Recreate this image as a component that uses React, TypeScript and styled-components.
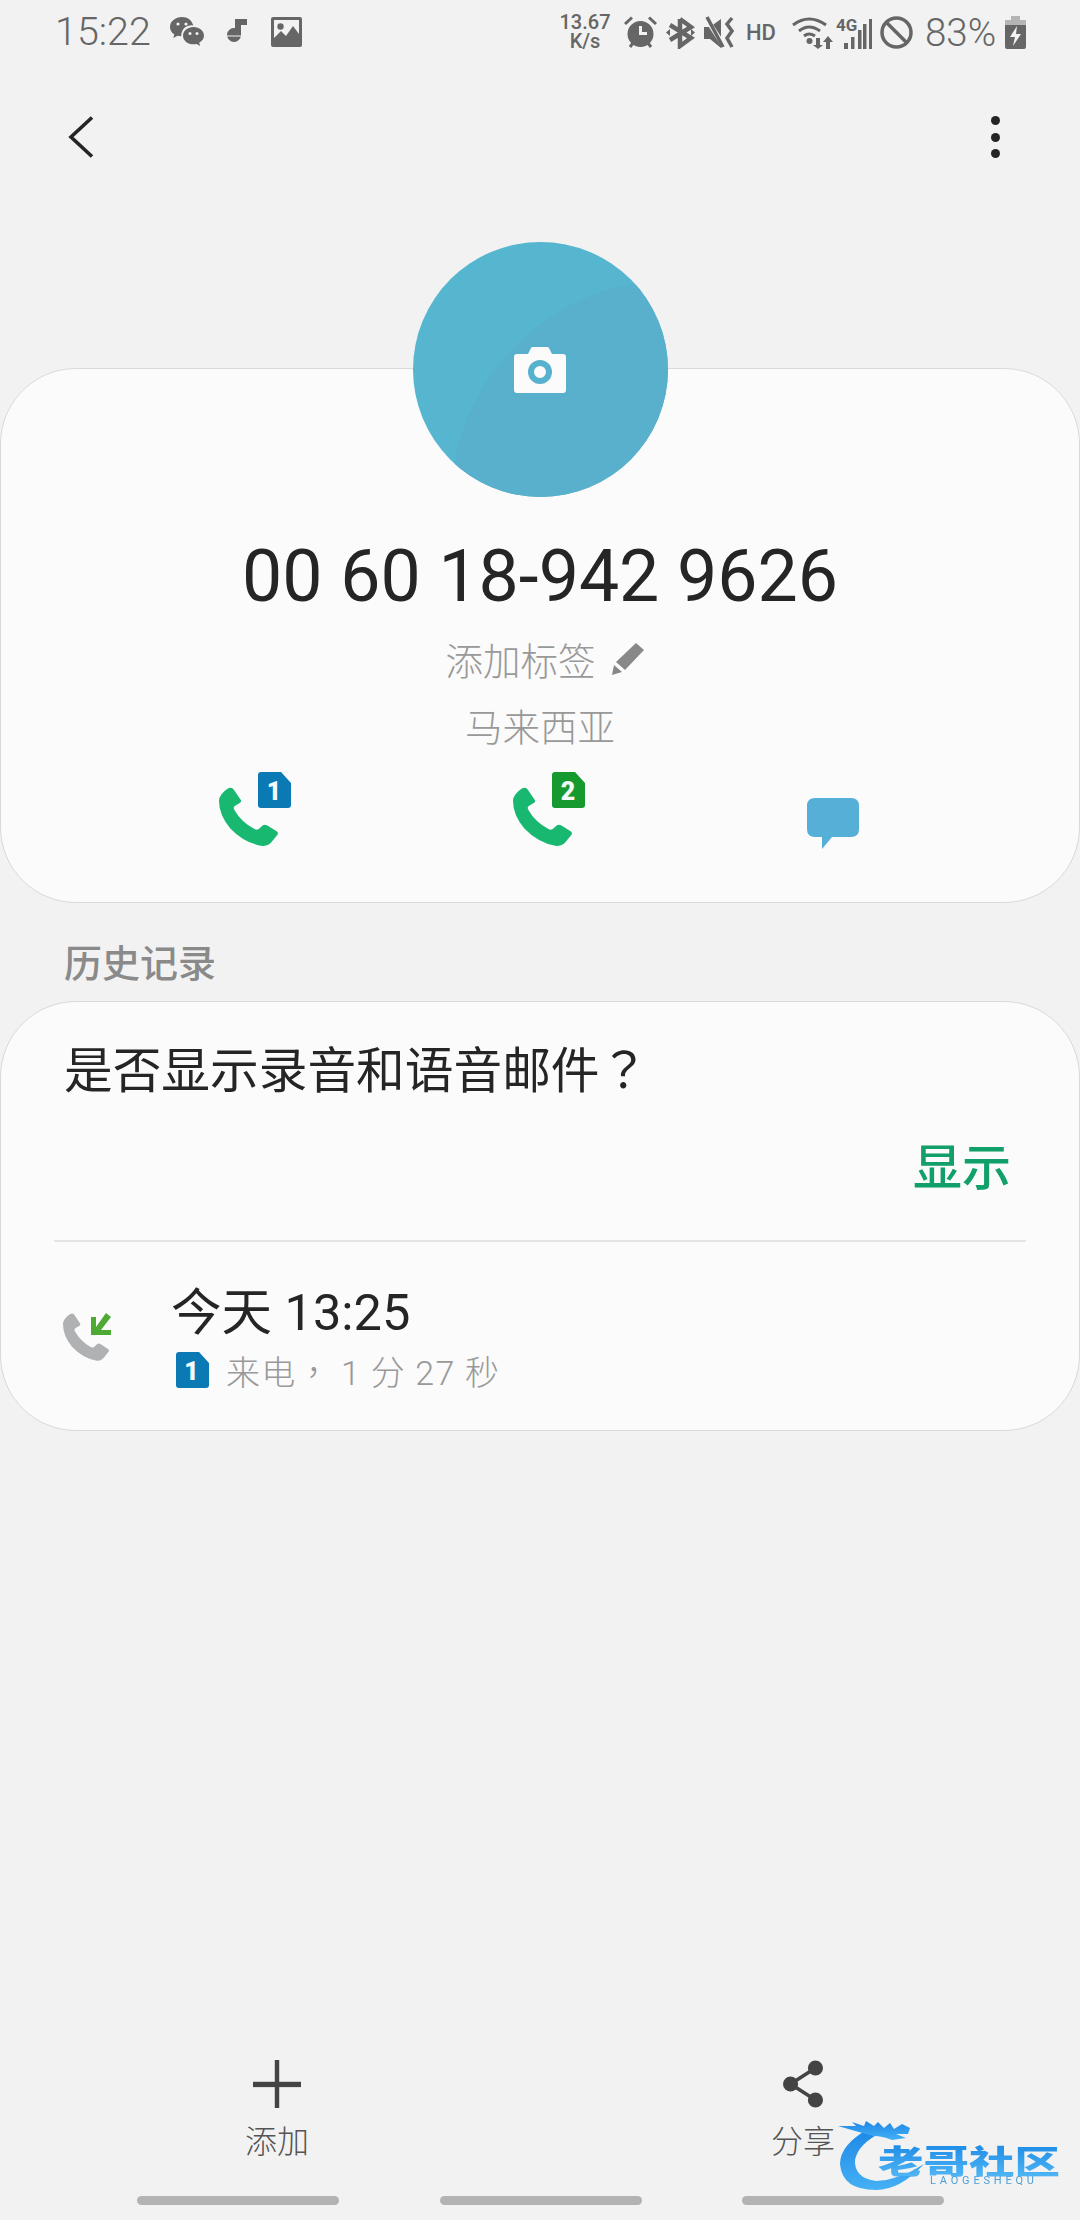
import React from 'react';
import styled, { createGlobalStyle } from 'styled-components';

const GlobalStyle = createGlobalStyle`
  html, body {
    margin: 0;
    padding: 0;
    background: #f2f2f2;
  }
  * { box-sizing: border-box; }
`;

const Page = styled.div`
  position: relative;
  width: 1080px;
  height: 2220px;
  display: flex;
  flex-direction: column;
  overflow: hidden;
  background: #f2f2f2;
  color: #252525;
  font-family: Roboto, "Noto Sans CJK SC", sans-serif;
`;

const StatusBar = styled.div`
  height: 64px;
  padding: 0 54px 0 55px;
  display: flex;
  align-items: center;
  justify-content: space-between;
  color: #666;
`;

const StatusGroup = styled.div`
  display: flex;
  align-items: center;
`;

const Clock = styled.span`
  font-size: 39.5px;
  font-weight: 300;
  line-height: 64px;
  width: 115px;
`;

const StatusIcon = styled.svg<{ $gap?: number }>`
  display: block;
  flex: none;
  margin-left: ${({ $gap }) => $gap ?? 0}px;
  fill: currentColor;
`;

const NetSpeed = styled.div`
  width: 54px;
  font-size: 20px;
  font-weight: 500;
  line-height: 19px;
  text-align: center;
`;

const HdMark = styled.span`
  margin-left: 11px;
  font-size: 22px;
  font-weight: 500;
  width: 28px;
`;

const Percent = styled.span`
  margin-left: 12px;
  width: 72px;
  font-size: 38.5px;
  font-weight: 300;
`;

const Header = styled.div`
  height: 178px;
  padding: 52px 80px 0 68px;
  display: flex;
  justify-content: space-between;
  align-items: flex-start;
`;

const Dots = styled.div`
  display: flex;
  flex-direction: column;
  gap: 7.5px;
`;

const Dot = styled.span`
  width: 9px;
  height: 9px;
  border-radius: 50%;
  background: #252525;
`;

const Card = styled.section`
  background: #fbfbfb;
  border: 1px solid #d9d9d9;
  border-radius: 76px;
`;

const ContactCard = styled(Card)`
  margin-top: 126px;
  height: 535px;
  display: flex;
  flex-direction: column;
  align-items: center;
`;

const Avatar = styled.div`
  position: relative;
  flex: none;
  width: 255px;
  height: 255px;
  margin-top: -127px;
  border-radius: 50%;
  overflow: hidden;
  background: #56b5cf;
  display: flex;
  align-items: center;
  justify-content: center;

  &::before {
    content: '';
    position: absolute;
    left: 38px;
    top: 38px;
    width: 444px;
    height: 444px;
    border-radius: 50%;
    background: #59b0cc;
  }
`;

const CameraIcon = styled.svg`
  position: relative;
  display: block;
`;

const PhoneNumber = styled.div`
  margin-top: 39px;
  font-size: 71.6px;
  line-height: 82px;
  color: #252525;
`;

const LabelRow = styled.div`
  margin-top: 16px;
  height: 48px;
  display: flex;
  align-items: center;
  gap: 16px;
  padding-left: 10px;
  font-size: 37.5px;
  font-weight: 300;
  color: #999;
`;

const Region = styled.div`
  margin-top: 22px;
  height: 48px;
  line-height: 48px;
  font-size: 37.5px;
  font-weight: 300;
  color: #999;
`;

const ActionRow = styled.div`
  margin-top: 20px;
  width: 100%;
  padding: 0 220px 0 218px;
  display: flex;
  justify-content: space-between;
  align-items: flex-start;
`;

const CallAction = styled.div`
  position: relative;
  width: 60px;
  height: 75px;
  padding-top: 15px;
`;

const SimOnCall = styled.div`
  position: absolute;
  left: 39px;
  top: 0;
`;

const MessageIcon = styled.svg`
  display: block;
  margin: 26px 0 0 0;
`;

const SectionTitle = styled.h2`
  margin: 41px 0 0 64px;
  height: 40px;
  line-height: 40px;
  font-size: 38px;
  font-weight: 500;
  color: #8a8a8a;
`;

const HistoryCard = styled(Card)`
  margin-top: 17px;
  height: 430px;
  display: flex;
  flex-direction: column;
`;

const PromptText = styled.div`
  margin: 36px 0 0 63px;
  font-size: 48.7px;
  line-height: 58px;
  font-weight: 400;
  color: #252525;
`;

const CenteredPunct = styled.span`
  font-family: "Noto Sans CJK TC", sans-serif;
`;

const ShowButton = styled.div`
  margin: 40px 68px 0 0;
  align-self: flex-end;
  font-size: 49px;
  line-height: 56px;
  font-weight: 500;
  color: #12a06a;
`;

const Divider = styled.div`
  margin: 43px 53px 0;
  height: 2px;
  background: #e4e4e4;
`;

const CallRow = styled.div`
  margin-top: 44px;
  padding-left: 62px;
  display: flex;
  align-items: center;
  gap: 60px;
`;

const CallInfo = styled.div`
  display: flex;
  flex-direction: column;
`;

const CallTime = styled.div`
  font-size: 50.5px;
  line-height: 54px;
  color: #252525;
`;

const CallDetail = styled.div`
  margin-top: 12px;
  height: 36px;
  display: flex;
  align-items: center;
  gap: 17px;
  padding-left: 5px;
  font-size: 34px;
  font-weight: 300;
  color: #999;
  letter-spacing: 1.2px;
`;

const BottomNav = styled.nav`
  margin-top: auto;
  padding: 0 14px;
  display: grid;
  grid-template-columns: 1fr 1fr;
`;

const NavItem = styled.div`
  height: 100px;
  display: flex;
  flex-direction: column;
  align-items: center;
  color: #444;
`;

const NavLabel = styled.span`
  margin-top: 16px;
  font-size: 32px;
  line-height: 36px;
  font-weight: 300;
  color: #555;
`;

const HomeBars = styled.div`
  margin-top: 36px;
  margin-bottom: 15px;
  padding-left: 137px;
  display: flex;
  gap: 100.5px;
`;

const HomeBar = styled.span`
  width: 202px;
  height: 9px;
  border-radius: 5px;
  background: #b3b3b3;
`;

const Watermark = styled.div`
  position: absolute;
  left: 838px;
  top: 2120px;
  width: 226px;
  height: 74px;
`;

const WatermarkTitle = styled.span`
  position: absolute;
  left: 40px;
  top: 17px;
  font-family: "Noto Sans CJK SC", sans-serif;
  font-size: 45.5px;
  line-height: 46px;
  font-weight: 900;
  white-space: nowrap;
  background: linear-gradient(#1d8ae6, #4fb6f5);
  -webkit-background-clip: text;
  background-clip: text;
  color: transparent;
  transform: scaleY(0.72);
  filter: blur(0.7px);
`;

const WatermarkSub = styled.span`
  position: absolute;
  left: 92px;
  top: 55px;
  font-size: 11px;
  line-height: 12px;
  letter-spacing: 3.8px;
  white-space: nowrap;
  color: #4d9fd8;
  filter: blur(0.3px);
`;

const HANDSET =
  'M20 4Q26 -1 31 6L47 38Q50 44 45 48L35 56Q30 60 33 68Q48 105 78 127Q84 130 88 124L94 116Q98 111 104 115L124 132Q131 138 125 146L112 168Q104 179 94 177Q55 168 25 125Q0 85 0 42Q0 22 20 4Z';

const Handset: React.FC<{ size: number; color: string }> = ({ size, color }) => (
  <svg width={size} height={size} viewBox="0 0 130 180" preserveAspectRatio="none" style={{ display: 'block' }}>
    <path d={HANDSET} fill={color} />
  </svg>
);

const SimBadge: React.FC<{ n: string; color: string }> = ({ n, color }) => (
  <svg width={33} height={36} viewBox="0 0 33 36" style={{ display: 'block', flex: 'none' }}>
    <path d="M3 0H23L33 11V33Q33 36 30 36H3Q0 36 0 33V3Q0 0 3 0Z" fill={color} />
    <text x="16" y="28" textAnchor="middle" fontFamily="Roboto, sans-serif" fontWeight="900" fontSize="25" fill="#f4fbfd">
      {n}
    </text>
  </svg>
);

const App: React.FC = () => (
  <Page>
    <GlobalStyle />
    <StatusBar>
      <StatusGroup>
        <Clock>15:22</Clock>
        <StatusIcon width="34" height="30" viewBox="0 0 34 30">
          <path d="M12 0C5.4 0 0 4.4 0 10c0 3.2 1.700 5.700 4.300 7.400L3.300 21l4.200-2.200c1.200.3 2.500.5 3.800.5a10 10 0 0 1 12-10.800C22 3.300 17.500 0 12 0Z" />
          <path d="M23.500 10C17.700 10 13 13.800 13 18.700S17.700 27.300 23.500 27.300c1.100 0 2.100-.1 3.100-.4l3.500 2.100-.9-3.300c2.900-1.600 4.800-4.200 4.800-7C34 13.800 29.300 10 23.500 10Z" />
          <g fill="#f2f2f2">
            <circle cx="8" cy="7" r="1.600" />
            <circle cx="16" cy="7" r="1.600" />
            <circle cx="20" cy="16.500" r="1.500" />
            <circle cx="27" cy="16.500" r="1.500" />
          </g>
        </StatusIcon>
        <StatusIcon $gap={20} width="23" height="26" viewBox="0 0 23 26">
          <path d="M11 0H23V6H17V16A7 7 0 1 1 11 9Z" />
          <path d="M0 17H23" stroke="#f2f2f2" strokeWidth="1" />
        </StatusIcon>
        <StatusIcon $gap={24} width="31" height="30" viewBox="0 0 31 30">
          <path fillRule="evenodd" d="M2 0H29Q31 0 31 2V28Q31 30 29 30H2Q0 30 0 28V2Q0 0 2 0ZM3 3V21L10 14L15 19L22 9L28 17V3Z" />
          <circle cx="9.500" cy="9.500" r="3.200" />
        </StatusIcon>
      </StatusGroup>
      <StatusGroup>
        <NetSpeed>
          13.67
          <br />
          K/s
        </NetSpeed>
        <StatusIcon $gap={12} width="33" height="32" viewBox="0 0 33 32">
          <path fillRule="evenodd" d="M16.500 5A13 13 0 1 1 16.500 31 13 13 0 0 1 16.500 5ZM15 10V19H23V16H18V10Z" />
          <path d="M1 8L8 1.500" stroke="currentColor" strokeWidth="3" />
          <path d="M32 8L25 1.500" stroke="currentColor" strokeWidth="3" />
          <path d="M6 31L9 27M27 31L24 27" stroke="currentColor" strokeWidth="3" />
        </StatusIcon>
        <StatusIcon $gap={9} width="29" height="33" viewBox="0 0 29 33" fill="none">
          <path d="M14 3V30L25 22L4 9M14 3L25 11L4 24" fill="none" stroke="currentColor" strokeWidth="4.500" />
          <path d="M0 16.500L4 13V20ZM29 16.500L25 13V20Z" />
        </StatusIcon>
        <StatusIcon $gap={9} width="31" height="33" viewBox="0 0 31 33">
          <path d="M0 11H6L17 3V32L6 23H0Z" />
          <path d="M2 2L20 30" stroke="#f2f2f2" strokeWidth="5" />
          <path d="M3 1L19 31" stroke="currentColor" strokeWidth="3.500" />
          <path d="M28 2L23 8L28 15L23 22L28 31" stroke="currentColor" strokeWidth="3.500" fill="none" />
        </StatusIcon>
        <HdMark>HD</HdMark>
        <StatusIcon $gap={18} width="41" height="33" viewBox="0 0 41 33">
          <g fill="none" stroke="currentColor" strokeWidth="3">
            <path d="M1 9Q17 -3 34 9" />
            <path d="M7 15Q17 7 28 15" />
            <path d="M12 20Q17 16 23 20" />
          </g>
          <circle cx="17.500" cy="25" r="3" />
          <path d="M24 22H28V29H31L26 33L21 29H24Z" />
          <path d="M34 33V26H31L36 20L41 26H38V33Z" />
        </StatusIcon>
        <StatusIcon $gap={3} width="36" height="33" viewBox="0 0 36 33">
          <text x="0" y="15" fontFamily="Roboto, sans-serif" fontWeight="700" fontSize="17">
            4G
          </text>
          <rect x="8" y="27" width="4" height="6" />
          <rect x="15" y="21" width="3.500" height="12" />
          <rect x="22" y="14" width="3.500" height="19" />
          <rect x="27" y="8" width="3.500" height="25" />
          <rect x="33" y="3" width="3" height="30" />
        </StatusIcon>
        <StatusIcon $gap={8} width="33" height="33" viewBox="0 0 33 33" fill="none">
          <circle cx="16.500" cy="16.500" r="14.500" fill="none" stroke="currentColor" strokeWidth="3.500" />
          <path d="M6.500 6.500L26.500 26.500" stroke="currentColor" strokeWidth="3.500" />
        </StatusIcon>
        <Percent>83%</Percent>
        <StatusIcon $gap={8} width="21" height="33" viewBox="0 0 21 33">
          <path d="M6 0H15V4H21V9H0V4H6Z" fill="#b5b5b5" />
          <path fillRule="evenodd" d="M0 9H21V31Q21 33 19 33H2Q0 33 0 31ZM12 10L5 21H10L8 30L16 18H11Z" />
        </StatusIcon>
      </StatusGroup>
    </StatusBar>

    <Header>
      <svg width="26" height="42" viewBox="0 0 26 42" fill="none" stroke="#252525" strokeWidth="3.600">
        <path d="M24 1.500L3 21L24 40.500" />
      </svg>
      <Dots>
        <Dot />
        <Dot />
        <Dot />
      </Dots>
    </Header>

    <ContactCard>
      <Avatar>
        <CameraIcon width="52" height="46" viewBox="0 0 52 46">
          <path
            fillRule="evenodd"
            fill="#fbfbfb"
            d="M3 7H14L17 1Q17.500 0 19 0H33Q34.500 0 35 1L38 7H49Q52 7 52 10V43Q52 46 49 46H3Q0 46 0 43V10Q0 7 3 7Z"
          />
          <circle cx="26" cy="25" r="9" fill="none" stroke="#56b2cd" strokeWidth="6" />
        </CameraIcon>
      </Avatar>
      <PhoneNumber>00 60 18-942 9626</PhoneNumber>
      <LabelRow>
        <span>添加标签</span>
        <svg width="33" height="33" viewBox="0 0 33 33">
          <path d="M24 1L32 8L13 28L4 20Z" fill="#888" />
          <path d="M2 23L10 30L0 33Z" fill="#888" />
        </svg>
      </LabelRow>
      <Region>马来西亚</Region>
      <ActionRow>
        <CallAction>
          <Handset size={60} color="#19b871" />
          <SimOnCall>
            <SimBadge n="1" color="#0a79b4" />
          </SimOnCall>
        </CallAction>
        <CallAction>
          <Handset size={60} color="#19b871" />
          <SimOnCall>
            <SimBadge n="2" color="#169a30" />
          </SimOnCall>
        </CallAction>
        <MessageIcon width="52" height="51" viewBox="0 0 52 51">
          <path
            d="M8 0H44Q52 0 52 8V31Q52 39 44 39H25L15 51V39H8Q0 39 0 31V8Q0 0 8 0Z"
            fill="#55afd6"
          />
        </MessageIcon>
      </ActionRow>
    </ContactCard>

    <SectionTitle>历史记录</SectionTitle>
    <HistoryCard>
      <PromptText>
        是否显示录音和语音邮件
        <CenteredPunct>？</CenteredPunct>
      </PromptText>
      <ShowButton>显示</ShowButton>
      <Divider />
      <CallRow>
        <svg width="48" height="48" viewBox="0 0 48 48" style={{ flex: 'none' }}>
          <path transform="scale(0.36 0.27)" d={HANDSET} fill="#b0b1b3" />
          <path d="M28 22V4H33V14L43 0L48 4L38 17H48V22Z" fill="#4dab35" />
        </svg>
        <CallInfo>
          <CallTime>今天 13:25</CallTime>
          <CallDetail>
            <SimBadge n="1" color="#0a79b4" />
            <span>
              来电<CenteredPunct>，</CenteredPunct> 1 分 27 秒
            </span>
          </CallDetail>
        </CallInfo>
      </CallRow>
    </HistoryCard>

    <BottomNav>
      <NavItem>
        <svg width="54" height="54" viewBox="0 0 54 54" fill="#444">
          <rect x="24.500" width="5" height="54" />
          <rect y="24.500" width="54" height="6" />
        </svg>
        <NavLabel>添加</NavLabel>
      </NavItem>
      <NavItem>
        <svg width="46" height="54" viewBox="0 0 46 54" fill="#444">
          <circle cx="37" cy="9" r="8.500" />
          <circle cx="9" cy="27" r="8.500" />
          <circle cx="37" cy="45" r="8.500" />
          <path d="M37 9L9 27L37 45" fill="none" stroke="#444" strokeWidth="4" />
        </svg>
        <NavLabel>分享</NavLabel>
      </NavItem>
    </BottomNav>
    <HomeBars>
      <HomeBar />
      <HomeBar />
      <HomeBar />
    </HomeBars>

    <Watermark>
      <svg width="90" height="74" viewBox="0 0 90 74" style={{ display: 'block', filter: 'blur(0.5px)' }}>
        <defs>
          <linearGradient id="wmRing" x1="0" y1="0" x2="0" y2="1">
            <stop offset="0" stopColor="#1d88e6" />
            <stop offset="1" stopColor="#45b0f4" />
          </linearGradient>
        </defs>
        <path d="M30 9Q2 25 2 44Q4 70 38 70Q62 70 86 44Q62 60 38 61Q16 58 17 40Q20 24 44 12Z" fill="url(#wmRing)" />
        <path
          d="M0 6L18 6L14 2L26 6L28 1L36 6L40 2L46 8L52 3L56 9L64 4L72 8L70 14L58 14L68 18L54 20Q44 16 36 16Q20 12 0 6Z"
          fill="url(#wmRing)"
        />
      </svg>
      <WatermarkTitle>老哥社区</WatermarkTitle>
      <WatermarkSub>LAOGESHEQU</WatermarkSub>
    </Watermark>
  </Page>
);

export default App;
